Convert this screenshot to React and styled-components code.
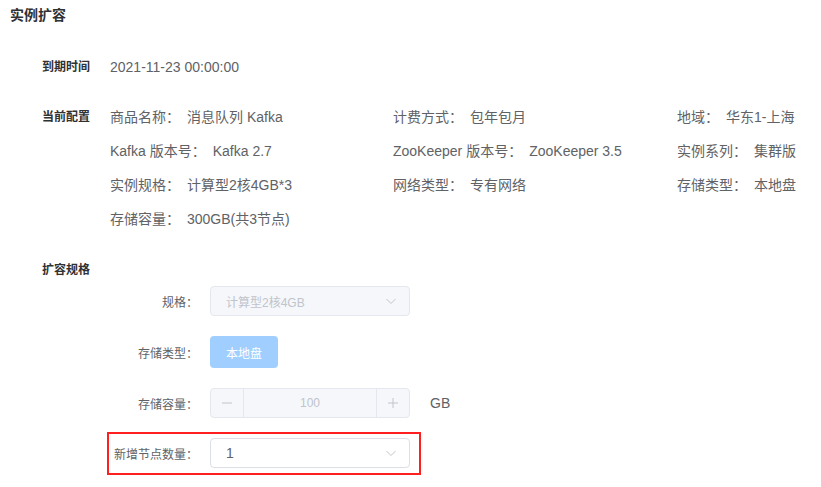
import React from "react";
import styled, { createGlobalStyle } from "styled-components";

const GlobalStyle = createGlobalStyle`
  html, body {
    margin: 0;
    padding: 0;
    background: #fff;
  }
  body {
    font-family: "Liberation Sans", Arial, "Noto Sans CJK SC", sans-serif;
    color: #606266;
  }
`;

const Page = styled.div`
  width: 821px;
  height: 487px;
  padding: 5px 0 0 10px;
  box-sizing: border-box;
  overflow: hidden;
`;

const Title = styled.div`
  font-size: 14px;
  font-weight: bold;
  line-height: 20px;
  color: #303133;
`;

const Section = styled.div`
  display: flex;
  margin-left: 32px;
  margin-top: ${(p) => p.$top || 0}px;
`;

const SectionLabel = styled.div`
  width: 68px;
  flex-shrink: 0;
  font-size: 12px;
  font-weight: bold;
  line-height: ${(p) => p.$lh || 34}px;
  color: #303133;
`;

const Value = styled.div`
  font-size: 14px;
  line-height: 34px;
  color: #606266;
  white-space: nowrap;
`;

const Key = styled.span`
  margin-right: 7px;
`;

const ConfigGrid = styled.div`
  display: grid;
  grid-template-columns: 283px 284px 1fr;
  grid-auto-rows: 34px;
`;

const Form = styled.div`
  display: flex;
  flex-direction: column;
  margin-top: 6px;
  margin-left: 97px;
`;

const FormItem = styled.div`
  display: flex;
  align-items: center;
  width: fit-content;
  border: ${(p) => (p.$highlight ? "2px solid #ff1f1f" : "none")};
  padding: ${(p) => (p.$highlight ? "4px 9px 5px 0" : "0 11px 0 2px")};
  margin-top: ${(p) => p.$top || 0}px;
`;

const FormLabel = styled.div`
  width: 101px;
  box-sizing: border-box;
  padding-right: 12px;
  text-align: right;
  font-size: 12px;
  color: #606266;
  white-space: nowrap;
`;

const Select = styled.div`
  width: 200px;
  height: 30px;
  box-sizing: border-box;
  display: flex;
  align-items: center;
  justify-content: space-between;
  padding: 0 12px 0 15px;
  border: 1px solid ${(p) => (p.$disabled ? "#e4e7ed" : "#dcdfe6")};
  border-radius: 4px;
  background: ${(p) => (p.$disabled ? "#f5f7fa" : "#fff")};
  color: ${(p) => (p.$disabled ? "#c0c4cc" : "#606266")};
  font-size: ${(p) => (p.$disabled ? 12 : 14)}px;
`;

const TypeButton = styled.div`
  width: 68px;
  height: 32px;
  display: flex;
  align-items: center;
  justify-content: center;
  border-radius: 4px;
  background: #a0cfff;
  color: #fff;
  font-size: 12px;
`;

const NumberInput = styled.div`
  width: 200px;
  height: 30px;
  box-sizing: border-box;
  display: flex;
  border: 1px solid #e4e7ed;
  border-radius: 4px;
  background: #f5f7fa;
  overflow: hidden;
`;

const Stepper = styled.div`
  width: 32px;
  display: flex;
  align-items: center;
  justify-content: center;
  color: #c0c4cc;
  ${(p) => (p.$side === "left" ? "border-right" : "border-left")}: 1px solid #e4e7ed;
`;

const NumberValue = styled.div`
  flex: 1;
  display: flex;
  align-items: center;
  justify-content: center;
  font-size: 12px;
  color: #c0c4cc;
`;

const Unit = styled.div`
  margin-left: 20px;
  font-size: 14px;
  color: #606266;
`;

const Chevron = () => (
  <svg width="12" height="12" viewBox="0 0 12 12" fill="none">
    <path d="M1.5 4 L6 8.5 L10.5 4" stroke="#c0c4cc" strokeWidth="1" />
  </svg>
);

const config = [
  ["商品名称：", "消息队列 Kafka"],
  ["计费方式：", "包年包月"],
  ["地域：", "华东1-上海"],
  ["Kafka 版本号：", "Kafka 2.7"],
  ["ZooKeeper 版本号：", "ZooKeeper 3.5"],
  ["实例系列：", "集群版"],
  ["实例规格：", "计算型2核4GB*3"],
  ["网络类型：", "专有网络"],
  ["存储类型：", "本地盘"],
  ["存储容量：", "300GB(共3节点)"],
];

export default function App() {
  return (
    <Page>
      <GlobalStyle />
      <Title>实例扩容</Title>

      <Section $top={25}>
        <SectionLabel>到期时间</SectionLabel>
        <Value>2021-11-23 00:00:00</Value>
      </Section>

      <Section $top={16}>
        <SectionLabel>当前配置</SectionLabel>
        <ConfigGrid>
          {config.map(([k, v]) => (
            <Value key={k}>
              <Key>{k}</Key>
              {v}
            </Value>
          ))}
        </ConfigGrid>
      </Section>

      <Section $top={24}>
        <SectionLabel $lh={20}>扩容规格</SectionLabel>
      </Section>

      <Form>
        <FormItem>
          <FormLabel>规格：</FormLabel>
          <Select $disabled>
            <span>计算型2核4GB</span>
            <Chevron />
          </Select>
        </FormItem>
        <FormItem $top={20}>
          <FormLabel>存储类型：</FormLabel>
          <TypeButton>本地盘</TypeButton>
        </FormItem>
        <FormItem $top={20}>
          <FormLabel>存储容量：</FormLabel>
          <NumberInput>
            <Stepper $side="left">
              <svg width="12" height="12" viewBox="0 0 12 12">
                <path d="M1 6 H11" stroke="#c0c4cc" strokeWidth="1" />
              </svg>
            </Stepper>
            <NumberValue>100</NumberValue>
            <Stepper $side="right">
              <svg width="12" height="12" viewBox="0 0 12 12">
                <path d="M1 6 H11 M6 1 V11" stroke="#c0c4cc" strokeWidth="1" />
              </svg>
            </Stepper>
          </NumberInput>
          <Unit>GB</Unit>
        </FormItem>
        <FormItem $highlight $top={14}>
          <FormLabel>新增节点数量：</FormLabel>
          <Select>
            <span>1</span>
            <Chevron />
          </Select>
        </FormItem>
      </Form>
    </Page>
  );
}
